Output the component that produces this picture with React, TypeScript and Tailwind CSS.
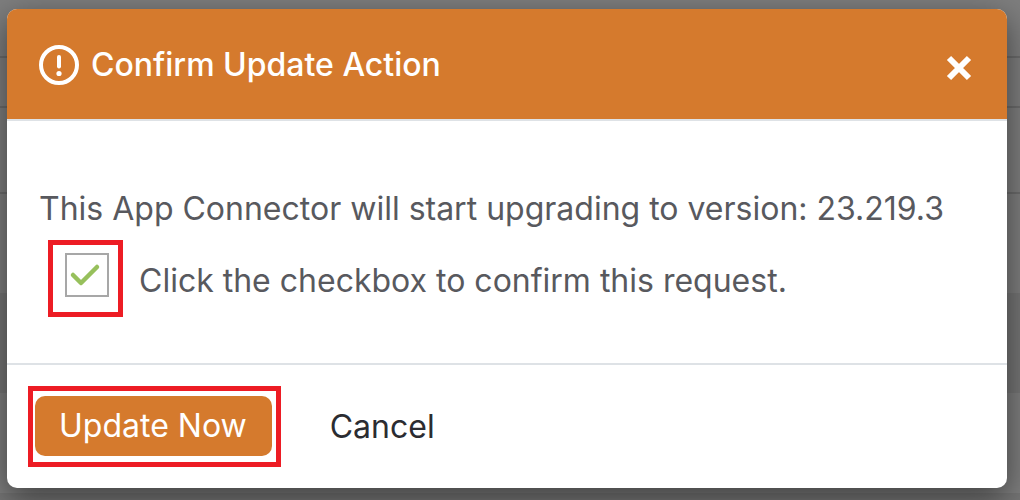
import { useState } from 'react';

function AlertIcon() {
  return (
    <svg viewBox="0 0 40 40" className="w-10 h-10 shrink-0" fill="none" aria-hidden="true">
      <circle cx="20" cy="20" r="18" stroke="white" strokeWidth="4" />
      <path d="M20 12v9.5" stroke="white" strokeWidth="4" strokeLinecap="round" />
      <circle cx="20" cy="28.5" r="2.6" fill="white" />
    </svg>
  );
}

function CloseIcon() {
  return (
    <svg viewBox="0 0 26 26" className="w-[26px] h-[26px]" aria-hidden="true">
      <path d="M3 3l20 20M23 3L3 23" stroke="white" strokeWidth="6" />
    </svg>
  );
}

// Dimmed table rows behind the dialog
function Backdrop() {
  return (
    <div className="flex flex-col h-full bg-[#7e7e7e]" aria-hidden="true">
      <div className="h-[58px] border-b-2 border-[#6c6c6c]" />
      <div className="h-[50px] border-b-2 border-[#6c6c6c]" />
      <div className="h-[86px] border-b-2 border-[#6c6c6c]" />
      <div className="h-[99px]" />
      <div className="h-[100px] bg-[#757575]" />
      <div className="grow" />
      <div className="h-[7px] bg-[#757575]" />
    </div>
  );
}

export default function App() {
  const [confirmed, setConfirmed] = useState(true);

  return (
    <div className="relative h-screen overflow-hidden font-['Inter',sans-serif] text-[32px] leading-10">
      <Backdrop />

      <div
        role="dialog"
        aria-labelledby="dialog-title"
        className="absolute top-[9px] left-[7px] right-[13px] rounded-[10px] overflow-hidden bg-white shadow-[0_10px_32px_rgba(0,0,0,0.5)]"
      >
        {/* Header */}
        <header className="flex items-center justify-between h-28 pt-[2px] px-8 bg-[#d57a2d] border-b-2 border-[#dee2e6]">
          <div className="flex items-center gap-3">
            <AlertIcon />
            <h1 id="dialog-title" className="font-medium text-white">
              Confirm Update Action
            </h1>
          </div>
          <button type="button" aria-label="Close" className="mt-[6px] pr-[3px]">
            <CloseIcon />
          </button>
        </header>

        {/* Body */}
        <div className="pt-17 pb-[46px] px-8 text-[#58595e]">
          <p>This App Connector will start upgrading to version: 23.219.3</p>
          <div className="flex items-center gap-4 mt-[11px] ml-[9px]">
            <div className="pl-3 pr-[9px] pt-2 pb-[15px] border-5 border-[#ed1c24]">
              <div className="grid w-11 h-11">
                <input
                  id="confirm-request"
                  type="checkbox"
                  checked={confirmed}
                  onChange={(e) => setConfirmed(e.target.checked)}
                  className="appearance-none col-start-1 row-start-1 w-11 h-11 border-2 border-[#a7a7a7] bg-white"
                />
                {confirmed && (
                  <svg viewBox="0 0 44 44" className="col-start-1 row-start-1 w-11 h-11 pointer-events-none" fill="none">
                    <path
                      d="M8 22l8 8 16-16"
                      stroke="#97c05c"
                      strokeWidth="4.5"
                      strokeLinecap="round"
                      strokeLinejoin="round"
                    />
                  </svg>
                )}
              </div>
            </div>
            <label htmlFor="confirm-request" className="pt-1">
              Click the checkbox to confirm this request.
            </label>
          </div>
        </div>

        {/* Footer */}
        <footer className="flex items-center gap-[49px] py-[21px] px-[21px] border-t-2 border-[#dee2e6]">
          <div className="pl-[2px] pr-1 pt-[5px] pb-[6px] border-5 border-[#ed1c24]">
            <button type="button" className="block h-[60px] pl-6 pr-[25px] rounded-[10px] bg-[#d57a2d] text-white">
              Update Now
            </button>
          </div>
          <button type="button" className="text-[#2b2c31]">
            Cancel
          </button>
        </footer>
      </div>
    </div>
  );
}
